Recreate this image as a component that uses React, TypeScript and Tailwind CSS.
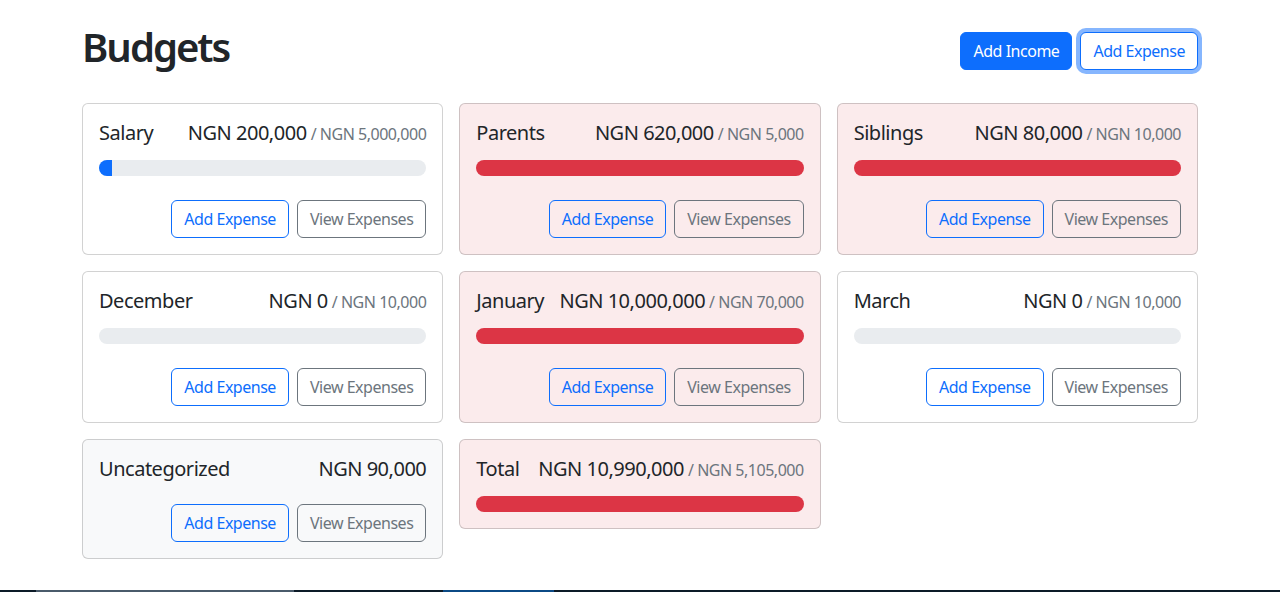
import React from 'react';

type Budget = {
  name: string;
  amount: string;
  max?: string;
  pct?: number;
  tone: 'white' | 'red' | 'light';
  bar?: 'blue' | 'red';
  buttons?: boolean;
};

const budgets: Budget[] = [
  { name: 'Salary', amount: 'NGN 200,000', max: 'NGN 5,000,000', pct: 4, tone: 'white', bar: 'blue', buttons: true },
  { name: 'Parents', amount: 'NGN 620,000', max: 'NGN 5,000', pct: 100, tone: 'red', bar: 'red', buttons: true },
  { name: 'Siblings', amount: 'NGN 80,000', max: 'NGN 10,000', pct: 100, tone: 'red', bar: 'red', buttons: true },
  { name: 'December', amount: 'NGN 0', max: 'NGN 10,000', pct: 0, tone: 'white', bar: 'blue', buttons: true },
  { name: 'January', amount: 'NGN 10,000,000', max: 'NGN 70,000', pct: 100, tone: 'red', bar: 'red', buttons: true },
  { name: 'March', amount: 'NGN 0', max: 'NGN 10,000', pct: 0, tone: 'white', bar: 'blue', buttons: true },
  { name: 'Uncategorized', amount: 'NGN 90,000', tone: 'light', buttons: true },
  { name: 'Total', amount: 'NGN 10,990,000', max: 'NGN 5,105,000', pct: 100, tone: 'red', bar: 'red' },
];

const toneClass = {
  white: 'bg-white',
  red: 'bg-[#fbebec]',
  light: 'bg-[#f8f9fa]',
};

const BudgetCard: React.FC<{ b: Budget }> = ({ b }) => (
  <div className={`${toneClass[b.tone]} border border-black/[0.175] rounded-[6px] p-4`}>
    <div className="h-6 flex justify-between items-baseline text-[20px] leading-[24px] text-[#212529] whitespace-nowrap pt-[1px]">
      <div className="mr-2">{b.name}</div>
      <div className="flex items-baseline">
        {b.amount}
        {b.max && <span className="text-[#6c757d] text-[16px] leading-[20px] ml-1">/ {b.max}</span>}
      </div>
    </div>
    {b.pct !== undefined && (
      <div className="mt-4 h-4 bg-[#e9ecef] rounded-full overflow-hidden flex">
        <div
          className={b.bar === 'red' ? 'bg-[#dc3545] h-full' : 'bg-[#0d6efd] h-full'}
          style={{ width: `${b.pct}%` }}
        />
      </div>
    )}
    {b.buttons && (
      <div className="flex justify-end gap-2 mt-6">
        <button className="border border-[#0d6efd] text-[#0d6efd] rounded-[6px] px-3 py-[6px] text-[16px] leading-[24px]">
          Add Expense
        </button>
        <button className="border border-[#6c757d] text-[#6c757d] rounded-[6px] px-3 py-[6px] text-[16px] leading-[24px]">
          View Expenses
        </button>
      </div>
    )}
  </div>
);

const App: React.FC = () => {
  return (
    <div
      className="h-[592px] flex flex-col bg-white text-[#212529] overflow-hidden tracking-[-0.03em]"
      style={{ fontFamily: '"Noto Sans", "Open Sans", sans-serif' }}
    >
      <div className="w-[1116px] mx-auto pt-[23px]">
        <div className="flex items-center gap-2 mb-6">
          <h1 className="mr-auto mb-2 text-[40px] leading-[48px] font-semibold tracking-[-0.05em]">Budgets</h1>
          <button className="bg-[#0d6efd] text-white border border-[#0d6efd] rounded-[6px] px-3 py-[6px] text-[16px] leading-[24px]">
            Add Income
          </button>
          <button className="bg-white text-[#0d6efd] border border-[#0d6efd] rounded-[6px] px-3 py-[6px] text-[16px] leading-[24px] shadow-[0_0_0_4px_rgba(13,110,253,0.5)]">
            Add Expense
          </button>
        </div>
        <div className="grid grid-cols-3 gap-4 items-start">
          {budgets.map((b) => (
            <BudgetCard key={b.name} b={b} />
          ))}
        </div>
      </div>
      <div className="flex-1" />
      <div className="h-[2px] flex bg-[#0c1b28]">
        <div className="w-[36px]" />
        <div className="w-[258px] bg-[#4a5b6b]" />
        <div className="w-[149px]" />
        <div className="w-[111px] bg-[#0b4a85]" />
      </div>
    </div>
  );
};

export default App;
